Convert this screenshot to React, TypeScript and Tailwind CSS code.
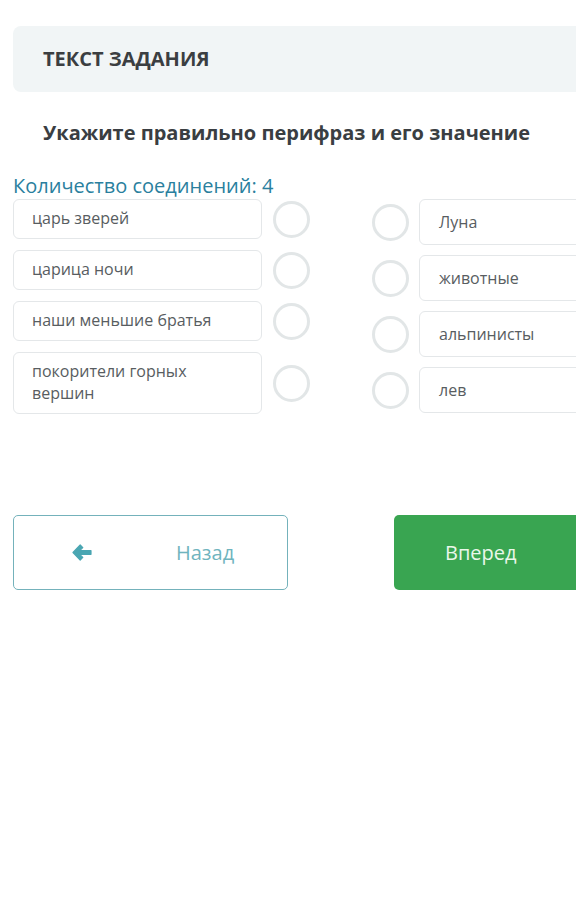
const leftItems: Array<{ label: string; h: string }> = [
  { label: 'царь зверей', h: 'h-[40px]' },
  { label: 'царица ночи', h: 'h-[40px]' },
  { label: 'наши меньшие братья', h: 'h-[40px]' },
  { label: 'покорители горных вершин', h: 'h-[62px]' },
];

const rightItems = ['Луна', 'животные', 'альпинисты', 'лев'];

function Circle() {
  return <div className="w-[37px] h-[37px] shrink-0 rounded-full border-[3px] border-[#e2e6e7] bg-white" />;
}

function ArrowLeft() {
  return (
    <svg width="20" height="17" viewBox="0 0 20 17" className="shrink-0">
      <path
        d="M8.2 1 L1 8.5 L8.2 16 L10.8 13.4 L7.4 10.3 H19 V6.7 H7.4 L10.8 3.6 Z"
        fill="#4aa6b2"
        stroke="#4aa6b2"
        strokeWidth="1.2"
        strokeLinejoin="round"
      />
    </svg>
  );
}

export default function App() {
  return (
    <div className="w-[576px] h-[912px] overflow-hidden bg-white font-['Open_Sans',sans-serif]">
      <div className="w-[700px] pl-[13px]">
        {/* Task header */}
        <div className="mt-[26px] h-[66px] rounded-lg bg-[#f1f5f6] pl-[30px] flex items-center">
          <h2 className="text-[20px] font-bold text-[#3b3e41]">ТЕКСТ ЗАДАНИЯ</h2>
        </div>

        <p className="mt-[27px] pl-[30px] text-[20px] leading-[27px] font-bold text-[#3a3e42]">
          Укажите правильно перифраз и его значение
        </p>

        <div className="mt-[26px] text-[20px] leading-[27px] text-[#2a7f9e]">Количество соединений: 4</div>

        {/* Matching columns */}
        <div className="flex">
          <div className="w-[298px] flex flex-col gap-[11px]">
            {leftItems.map(({ label, h }) => (
              <div key={label} className="flex items-center gap-[11px]">
                <div
                  className={`w-[249px] ${h} rounded-md border border-[#e4e7e9] bg-white pl-[18px] pr-3 flex items-center text-[16px] leading-[22px] text-[#585d61]`}
                >
                  <span className={label.length > 20 ? 'w-[170px] -mt-[2px]' : '-mt-[2px]'}>{label}</span>
                </div>
                <Circle />
              </div>
            ))}
          </div>

          <div className="ml-[61px] flex flex-col gap-[10px]">
            {rightItems.map((label) => (
              <div key={label} className="flex items-center gap-[10px]">
                <Circle />
                <div className="w-[260px] h-[46px] rounded-md border border-[#e4e7e9] bg-white pl-[19px] flex items-center text-[16px] text-[#585d61]">
                  {label}
                </div>
              </div>
            ))}
          </div>
        </div>

        {/* Navigation */}
        <div className="mt-[101px] flex gap-[106px]">
          <button className="w-[275px] h-[75px] rounded-[5px] border border-[#74b2bb] bg-white flex items-center pl-[58px]">
            <ArrowLeft />
            <span className="ml-[84px] text-[20px] text-[#6fb4be]">Назад</span>
          </button>
          <button className="w-[275px] h-[75px] rounded-[5px] bg-[#39a551] flex items-center pl-[51px]">
            <span className="text-[20px] text-[#eaf7ea]">Вперед</span>
          </button>
        </div>
      </div>
    </div>
  );
}
